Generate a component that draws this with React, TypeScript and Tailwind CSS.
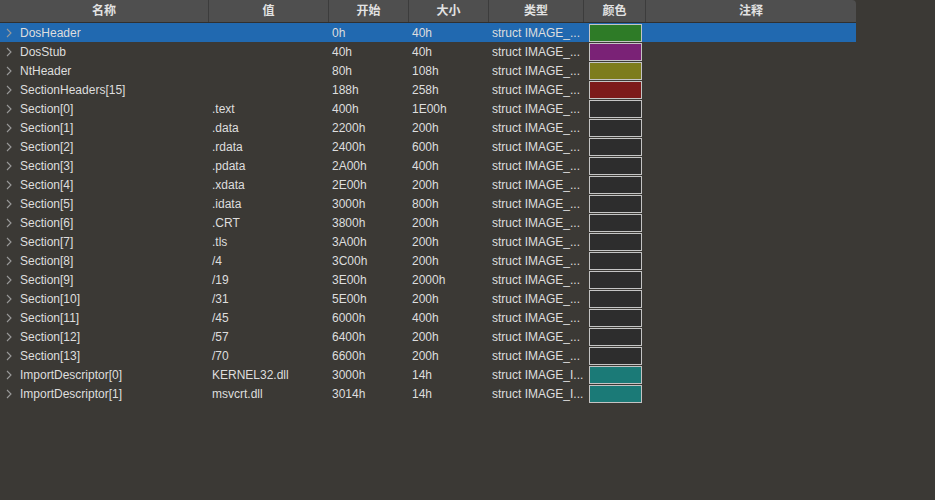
const font = { fontFamily: "'Liberation Sans', Arial, 'Noto Sans CJK SC', sans-serif" }

type Row = { name: string; value: string; start: string; size: string; type: string; color: string }

const sec = (i: number, value: string, start: string, size: string): Row => ({
  name: `Section[${i}]`,
  value,
  start,
  size,
  type: 'struct IMAGE_...',
  color: '#2d2d2d',
})

const rows: Row[] = [
  { name: 'DosHeader', value: '', start: '0h', size: '40h', type: 'struct IMAGE_...', color: '#2e7b27' },
  { name: 'DosStub', value: '', start: '40h', size: '40h', type: 'struct IMAGE_...', color: '#7a2276' },
  { name: 'NtHeader', value: '', start: '80h', size: '108h', type: 'struct IMAGE_...', color: '#7d7c1c' },
  { name: 'SectionHeaders[15]', value: '', start: '188h', size: '258h', type: 'struct IMAGE_...', color: '#7c1a1a' },
  sec(0, '.text', '400h', '1E00h'),
  sec(1, '.data', '2200h', '200h'),
  sec(2, '.rdata', '2400h', '600h'),
  sec(3, '.pdata', '2A00h', '400h'),
  sec(4, '.xdata', '2E00h', '200h'),
  sec(5, '.idata', '3000h', '800h'),
  sec(6, '.CRT', '3800h', '200h'),
  sec(7, '.tls', '3A00h', '200h'),
  sec(8, '/4', '3C00h', '200h'),
  sec(9, '/19', '3E00h', '2000h'),
  sec(10, '/31', '5E00h', '200h'),
  sec(11, '/45', '6000h', '400h'),
  sec(12, '/57', '6400h', '200h'),
  sec(13, '/70', '6600h', '200h'),
  { name: 'ImportDescriptor[0]', value: 'KERNEL32.dll', start: '3000h', size: '14h', type: 'struct IMAGE_I...', color: '#1b7a77' },
  { name: 'ImportDescriptor[1]', value: 'msvcrt.dll', start: '3014h', size: '14h', type: 'struct IMAGE_I...', color: '#1b7a77' },
]

const cols = [
  { label: '名称', w: 'w-[209px]' },
  { label: '值', w: 'w-[120px]' },
  { label: '开始', w: 'w-[80px]' },
  { label: '大小', w: 'w-[80px]' },
  { label: '类型', w: 'w-[95px]' },
  { label: '颜色', w: 'w-[62px]' },
  { label: '注释', w: 'w-[210px]' },
]

function Chevron() {
  return (
    <svg width="6" height="10" viewBox="0 0 6 10" className="shrink-0">
      <path d="M1 1 L5 5 L1 9" fill="none" stroke="#9a9a9a" strokeWidth="1.1" />
    </svg>
  )
}

export default function App() {
  return (
    <div className="w-[935px] h-[500px] bg-[#3b3935] text-[12px] text-[#dedede] overflow-hidden" style={font}>
      <div className="w-[856px]">
        <div className="flex h-[23px] bg-[#4f4f4f] border-b border-[#303030] rounded-tr-[4px]">
          {cols.map((c, i) => (
            <div
              key={c.label}
              className={`${c.w} flex items-center justify-center font-bold text-[#e2e2e2] ${i < cols.length - 1 ? 'border-r border-[#3c3c3c]' : ''}`}
            >
              {c.label}
            </div>
          ))}
        </div>
        {rows.map((r, i) => (
          <div key={r.name} className={`flex h-[19px] items-center ${i === 0 ? 'bg-[#2169b0]' : ''}`}>
            <div className="w-[209px] flex items-center pl-[6px] gap-[8px]">
              <Chevron />
              <span>{r.name}</span>
            </div>
            <div className="w-[120px] pl-[3px]">{r.value}</div>
            <div className="w-[80px] pl-[3px]">{r.start}</div>
            <div className="w-[80px] pl-[3px]">{r.size}</div>
            <div className="w-[95px] pl-[3px] whitespace-nowrap">{r.type}</div>
            <div className="w-[62px] pl-[5px] flex items-center">
              <div className="w-[53px] h-[18px] border border-[#c4c4c4]" style={{ backgroundColor: r.color }} />
            </div>
            <div className="w-[210px]" />
          </div>
        ))}
      </div>
    </div>
  )
}
